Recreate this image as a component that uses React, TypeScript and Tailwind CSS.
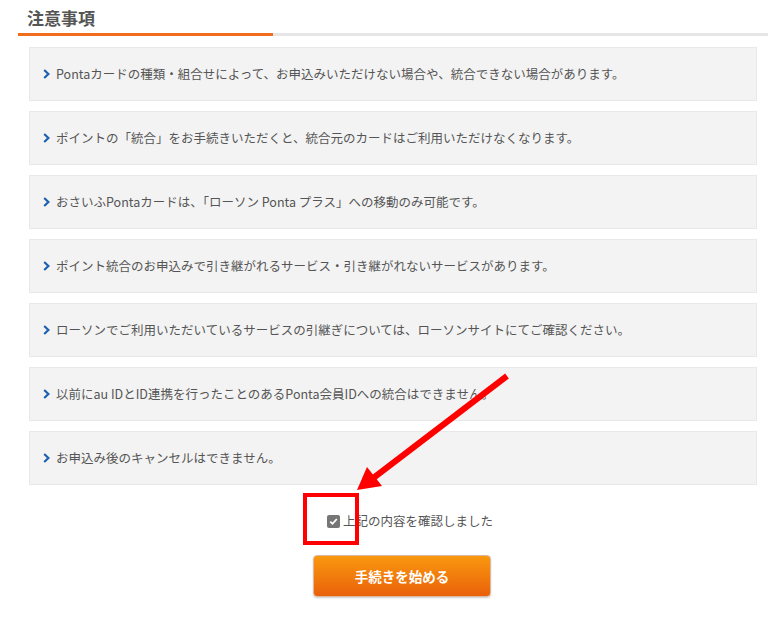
import React from "react";

const items = [
  "Pontaカードの種類・組合せによって、お申込みいただけない場合や、統合できない場合があります。",
  "ポイントの「統合」をお手続きいただくと、統合元のカードはご利用いただけなくなります。",
  "おさいふPontaカードは、「ローソン Ponta プラス」への移動のみ可能です。",
  "ポイント統合のお申込みで引き継がれるサービス・引き継がれないサービスがあります。",
  "ローソンでご利用いただいているサービスの引継ぎについては、ローソンサイトにてご確認ください。",
  "以前にau IDとID連携を行ったことのあるPonta会員IDへの統合はできません。",
  "お申込み後のキャンセルはできません。",
];

function Chevron() {
  return (
    <svg width="7" height="10" viewBox="0 0 7 10" className="shrink-0">
      <polyline points="1.2,1 5.4,5 1.2,9" fill="none" stroke="#1d5fb0" strokeWidth="2.2" />
    </svg>
  );
}

export default function App() {
  return (
    <div
      className="relative w-[768px] h-[618px] overflow-hidden bg-white text-[#555]"
      style={{ fontFamily: '"Noto Sans CJK JP", "Noto Sans", sans-serif' }}
    >
      <div className="pt-[8px]">
        <h2 className="ml-[27px] h-[20px] text-[17px] leading-[20px] font-bold text-[#555]">注意事項</h2>
        <div className="mt-[5px] ml-[18px] flex">
          <div className="w-[255px] h-[3px] bg-[#f26c1d]" />
          <div className="flex-1 h-[3px] bg-[#e6e6e6]" />
        </div>
      </div>

      <ul className="mt-[11px] ml-[29px] w-[728px] flex flex-col gap-[10px]">
        {items.map((t) => (
          <li
            key={t}
            className="h-[54px] flex items-center gap-[6px] pl-[13px] bg-[#f3f3f3] border border-[#e8e8e8] text-[12.5px] text-[#555]"
          >
            <Chevron />
            <span>{t}</span>
          </li>
        ))}
      </ul>

      <div className="mt-[26px] ml-[327px] h-[20px] flex items-center gap-[3px]">
        <span className="w-[13px] h-[13px] rounded-[2px] bg-[#767676] flex items-center justify-center">
          <svg width="9" height="9" viewBox="0 0 9 9">
            <polyline points="1.3,4.6 3.5,6.8 7.8,2" fill="none" stroke="#fff" strokeWidth="1.8" />
          </svg>
        </span>
        <span className="text-[12.5px] text-[#555]">上記の内容を確認しました</span>
      </div>

      <button className="mt-[24px] ml-[313px] w-[178px] h-[42px] rounded-[4px] border border-[#d9b9a0] bg-gradient-to-b from-[#f9980f] to-[#e9600a] text-white text-[13.5px] font-bold flex items-center justify-center shadow-[0_1px_2px_rgba(0,0,0,0.2)]">
        手続きを始める
      </button>

      <div className="absolute left-[303px] top-[493px] w-[56px] h-[52px] border-[4px] border-[#ff0000]" />
      <svg className="absolute left-0 top-0 pointer-events-none" width="768" height="618">
        <line x1="507" y1="376" x2="372" y2="479" stroke="#ff0000" strokeWidth="6" />
        <polygon points="357,490 367,467 382,486" fill="#ff0000" />
      </svg>
    </div>
  );
}
